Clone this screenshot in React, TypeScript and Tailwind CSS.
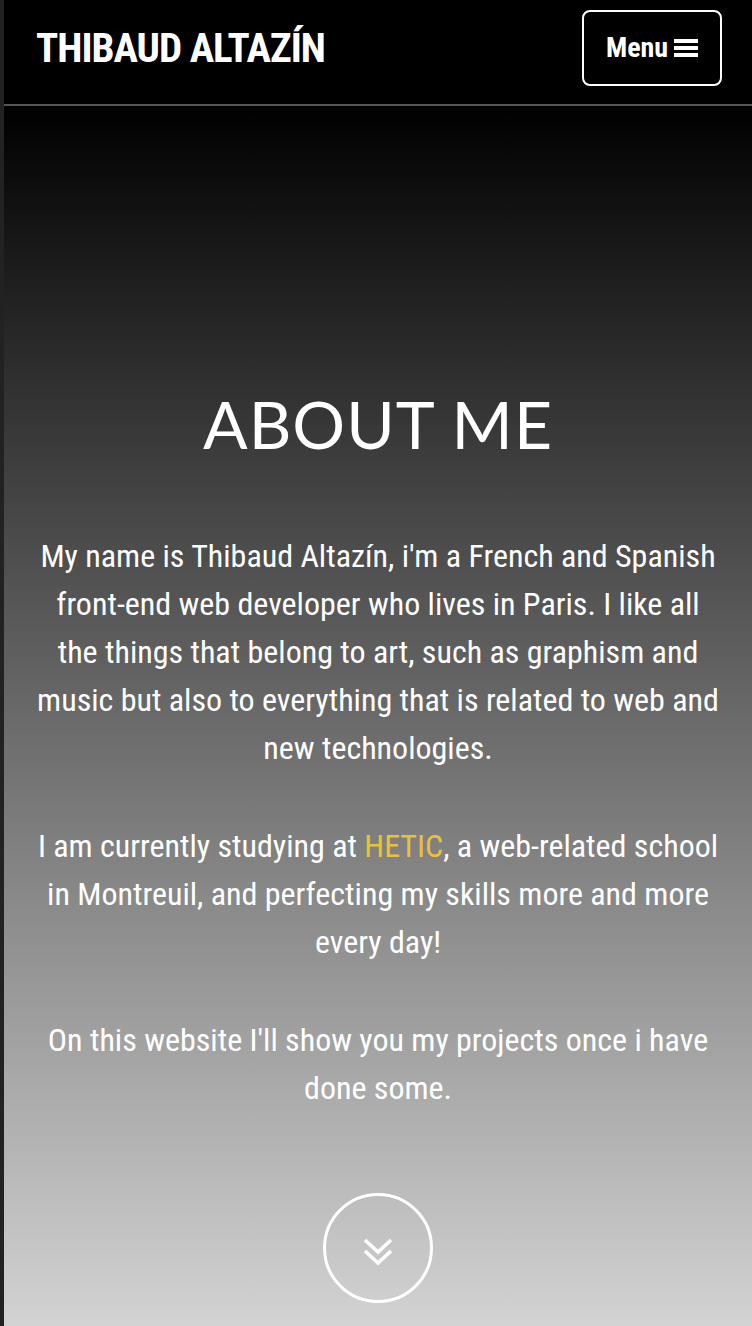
import React from "react";

function BarsIcon() {
  return (
    <svg width="24" height="20" viewBox="0 0 24 20" className="block">
      <rect x="0" y="1" width="24" height="4" fill="white" />
      <rect x="0" y="8" width="24" height="4" fill="white" />
      <rect x="0" y="15" width="24" height="4" fill="white" />
    </svg>
  );
}

function DoubleChevron() {
  return (
    <svg width="30" height="30" viewBox="0 0 30 30" fill="none" stroke="white" strokeWidth="3.5" strokeLinecap="butt" strokeLinejoin="miter" className="mt-[8px] block">
      <path d="M2 3 L15 15 L28 3" />
      <path d="M2 14 L15 26 L28 14" />
    </svg>
  );
}

export default function App() {
  const cond = { fontFamily: "Roboto, 'Liberation Sans', sans-serif" } as React.CSSProperties;
  return (
    <div className="flex min-h-[1326px] w-full bg-[#222]">
      <div className="w-[4px] shrink-0 bg-[#222]" />
      <div className="flex flex-1 flex-col">
        <header className="flex h-[106px] items-start justify-between border-b-2 border-[#555] bg-black pl-[32px] pr-[30px]">
          <div className="pt-[24px] text-[41px] font-bold leading-[48px] text-white font-stretch-condensed tracking-[-1px]" style={cond}>
            THIBAUD ALTAZÍN
          </div>
          <button className="mt-[10px] flex h-[76px] w-[140px] items-center justify-center gap-[6px] rounded-[8px] border-2 border-white text-white" style={cond}>
            <span className="text-[28px] font-bold leading-none font-stretch-condensed">Menu</span>
            <BarsIcon />
          </button>
        </header>
        <main className="flex flex-1 flex-col items-center bg-[linear-gradient(to_bottom,#000000,#d3d3d3)] px-[32px] pt-[278px] text-center text-white">
          <h1 className="text-[66px] font-normal leading-[80px] tracking-[1px]" style={{ fontFamily: "Lato, 'Open Sans', sans-serif" }}>
            ABOUT ME
          </h1>
          <div className="mt-[68px] text-[32px] font-[440] leading-[48px] font-stretch-condensed" style={cond}>
            <p>
              My name is Thibaud Altazín, i'm a French and Spanish front-end web developer who lives in Paris. I like all the things that belong to art, such as graphism and music but also to everything that is related to web and new technologies.
            </p>
            <p className="mt-[50px]">
              I am currently studying at <span className="text-[#e8c23c]">HETIC</span>, a web-related school in Montreuil, and perfecting my skills more and more every day!
            </p>
            <p className="mt-[50px]">
              On this website I'll show you my projects once i have done some.
            </p>
          </div>
          <div className="mt-[81px] flex h-[110px] w-[110px] items-center justify-center rounded-full border-[3px] border-white">
            <DoubleChevron />
          </div>
        </main>
      </div>
    </div>
  );
}
